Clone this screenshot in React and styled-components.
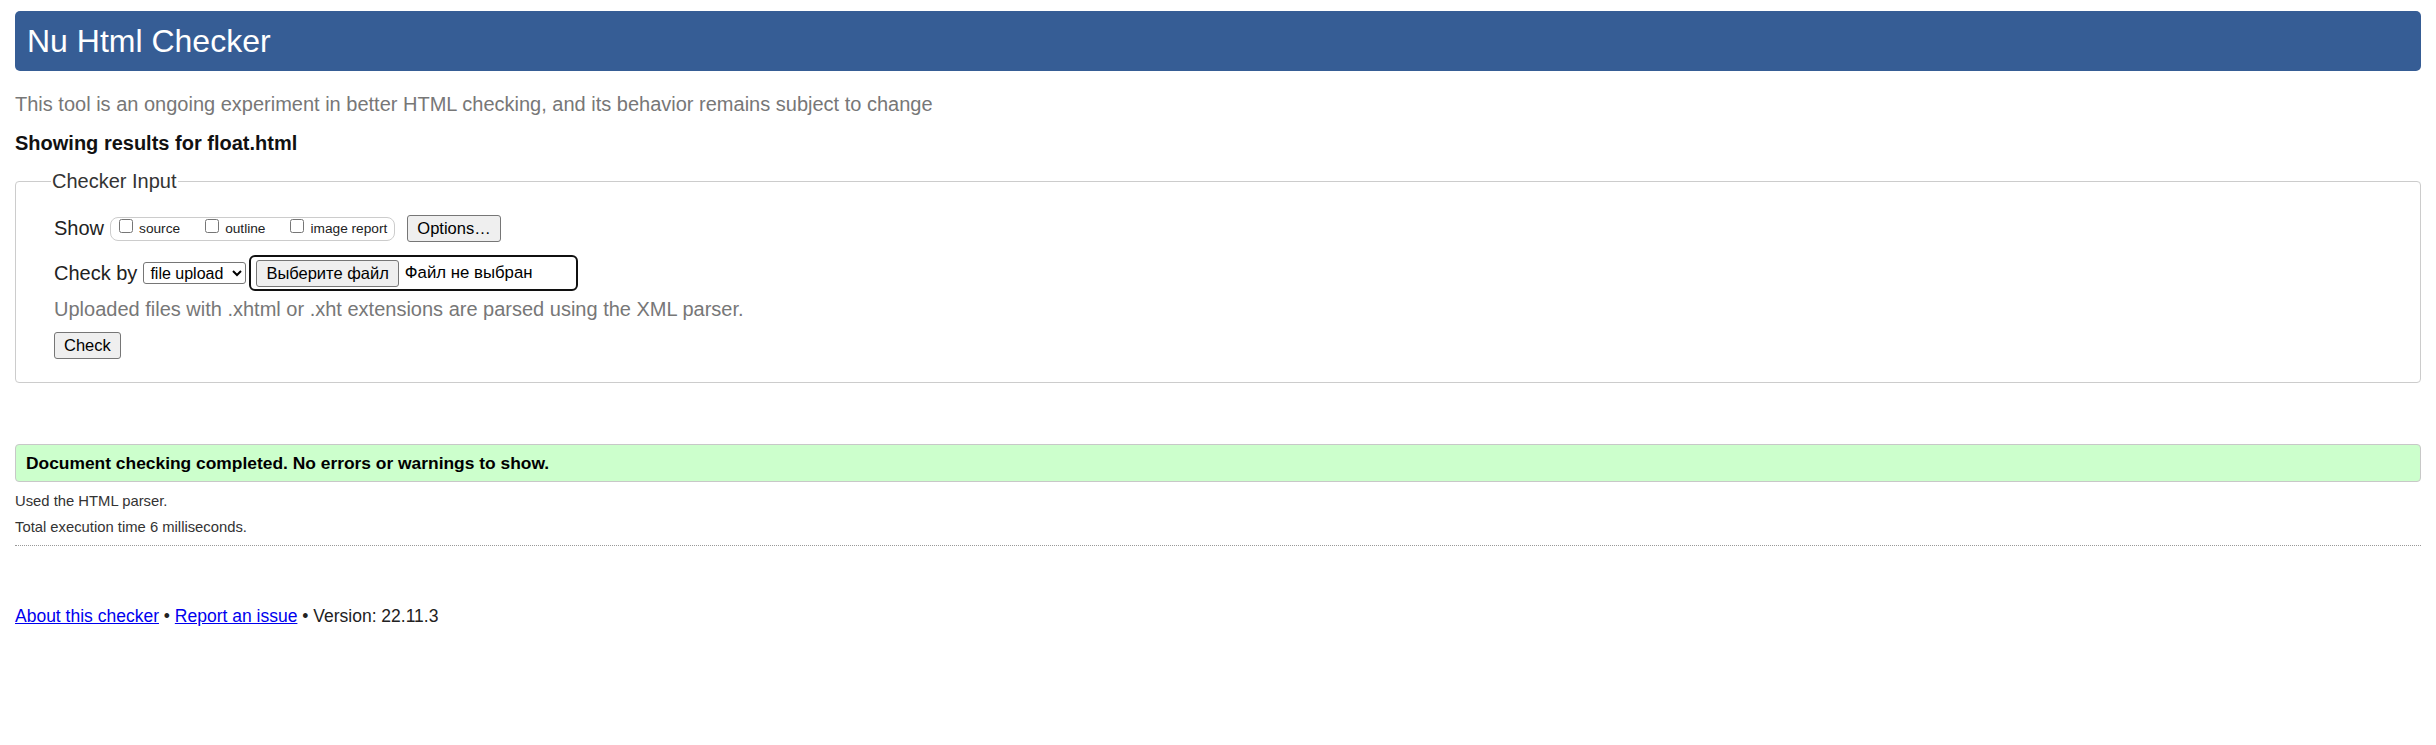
import React from 'react'
import styled, { createGlobalStyle } from 'styled-components'

const GlobalStyle = createGlobalStyle`
  html, body {
    margin: 0;
    padding: 0;
    background: #fff;
  }
  body {
    font-family: "Liberation Sans", Arial, sans-serif;
    color: #222;
  }
`

const Page = styled.div`
  display: flex;
  flex-direction: column;
  padding: 11px 15px 40px;
`
const Header = styled.h1`
  margin: 0;
  height: 60px;
  padding: 0 12px;
  background: #365d95;
  border-radius: 5px;
  color: #fff;
  font-size: 32px;
  font-weight: normal;
  line-height: 60px;
`
const Intro = styled.p`
  margin: 22px 0 0;
  font-size: 20px;
  line-height: 23px;
  color: #777;
`
const ResultsFor = styled.p`
  margin: 16px 0 0;
  font-size: 20px;
  line-height: 23px;
  font-weight: bold;
  color: #111;
`
const Fieldset = styled.fieldset`
  margin: 15px 0 0;
  padding: 22px 38px 23px;
  border: 1px solid #ccc;
  border-radius: 4px;
  min-inline-size: 0;
`
const Legend = styled.legend`
  margin-left: -3px;
  padding: 0 1px;
  font-size: 20px;
  color: #333;
`
const Row = styled.div`
  display: flex;
  align-items: center;
  margin-top: ${p => p.$top || 0}px;
`
const Label = styled.span`
  font-size: 20px;
  line-height: 23px;
  color: #222;
  margin-right: ${p => p.$gap || 6}px;
`
const Toggles = styled.div`
  box-sizing: border-box;
  display: flex;
  height: 24px;
  padding: 1px 7px 0 8px;
  border: 1px solid #ccc;
  border-radius: 8px;
  gap: 25px;
  margin-right: 12px;
`
const Toggle = styled.label`
  display: flex;
  align-items: baseline;
  font-size: 13.7px;
  line-height: 20px;
  color: #222;
`
const Checkbox = styled.input`
  width: 14px;
  height: 14px;
  margin: 0 6px 0 0;
`
const Button = styled.button`
  box-sizing: border-box;
  height: 27px;
  padding: 0 9px;
  border: 1px solid #767676;
  border-radius: 3px;
  background: #efefef;
  color: #000;
  font-family: "Liberation Sans", Arial, sans-serif;
  font-size: 16.5px;
`
const Select = styled.select`
  box-sizing: border-box;
  width: 103px;
  height: 22px;
  padding: 0 2px;
  margin-right: 3px;
  border: 1px solid #767676;
  border-radius: 3px;
  background: #fff;
  color: #000;
  font-family: "Liberation Sans", Arial, sans-serif;
  font-size: 16px;
`
const FilePicker = styled.div`
  box-sizing: border-box;
  display: flex;
  align-items: center;
  width: 329px;
  height: 36px;
  padding: 0 0 0 5px;
  border: 2px solid #101010;
  border-radius: 6px;
`
const FileName = styled.span`
  margin-left: 6px;
  font-size: 16.8px;
  color: #000;
`
const Hint = styled.p`
  margin: 7px 0 0;
  font-size: 20px;
  line-height: 23px;
  color: #777;
`
const Success = styled.div`
  margin-top: 61px;
  padding: 8px 10px;
  border: 1px solid #c8c8c8;
  border-radius: 4px;
  background: #ccffcc;
  font-size: 17.4px;
  line-height: 20px;
  font-weight: bold;
  color: #000;
`
const Note = styled.p`
  margin: ${p => p.$top || 0}px 0 0;
  font-size: 14.8px;
  line-height: 26px;
  color: #333;
`
const Rule = styled.hr`
  margin: 5px 0 0;
  height: 0;
  border: 0;
  border-top: 1px dotted #999;
`
const Footer = styled.p`
  margin: 60px 0 0;
  font-size: 17.5px;
  color: #222;
  a {
    color: #0000ee;
  }
`

const App = () => {
  return (
    <Page>
      <GlobalStyle />
      <Header>Nu Html Checker</Header>
      <Intro>This tool is an ongoing experiment in better HTML checking, and its behavior remains subject to change</Intro>
      <ResultsFor>Showing results for float.html</ResultsFor>

      <Fieldset>
        <Legend>Checker Input</Legend>
        <Row>
          <Label>Show</Label>
          <Toggles>
            <Toggle><Checkbox type="checkbox" />source</Toggle>
            <Toggle><Checkbox type="checkbox" />outline</Toggle>
            <Toggle><Checkbox type="checkbox" />image report</Toggle>
          </Toggles>
          <Button type="button">Options…</Button>
        </Row>
        <Row $top={13}>
          <Label>Check by</Label>
          <Select defaultValue="file">
            <option value="address">address</option>
            <option value="file">file upload</option>
            <option value="text">text input</option>
          </Select>
          <FilePicker>
            <Button type="button">Выберите файл</Button>
            <FileName>Файл не выбран</FileName>
          </FilePicker>
        </Row>
        <Hint>Uploaded files with .xhtml or .xht extensions are parsed using the XML parser.</Hint>
        <Row $top={11}>
          <Button type="button">Check</Button>
        </Row>
      </Fieldset>

      <Success>Document checking completed. No errors or warnings to show.</Success>
      <Note $top={6}>Used the HTML parser.</Note>
      <Note>Total execution time 6 milliseconds.</Note>
      <Rule />

      <Footer>
        <a href="#about">About this checker</a> • <a href="#issue">Report an issue</a> • Version: 22.11.3
      </Footer>
    </Page>
  )
}

export default App
